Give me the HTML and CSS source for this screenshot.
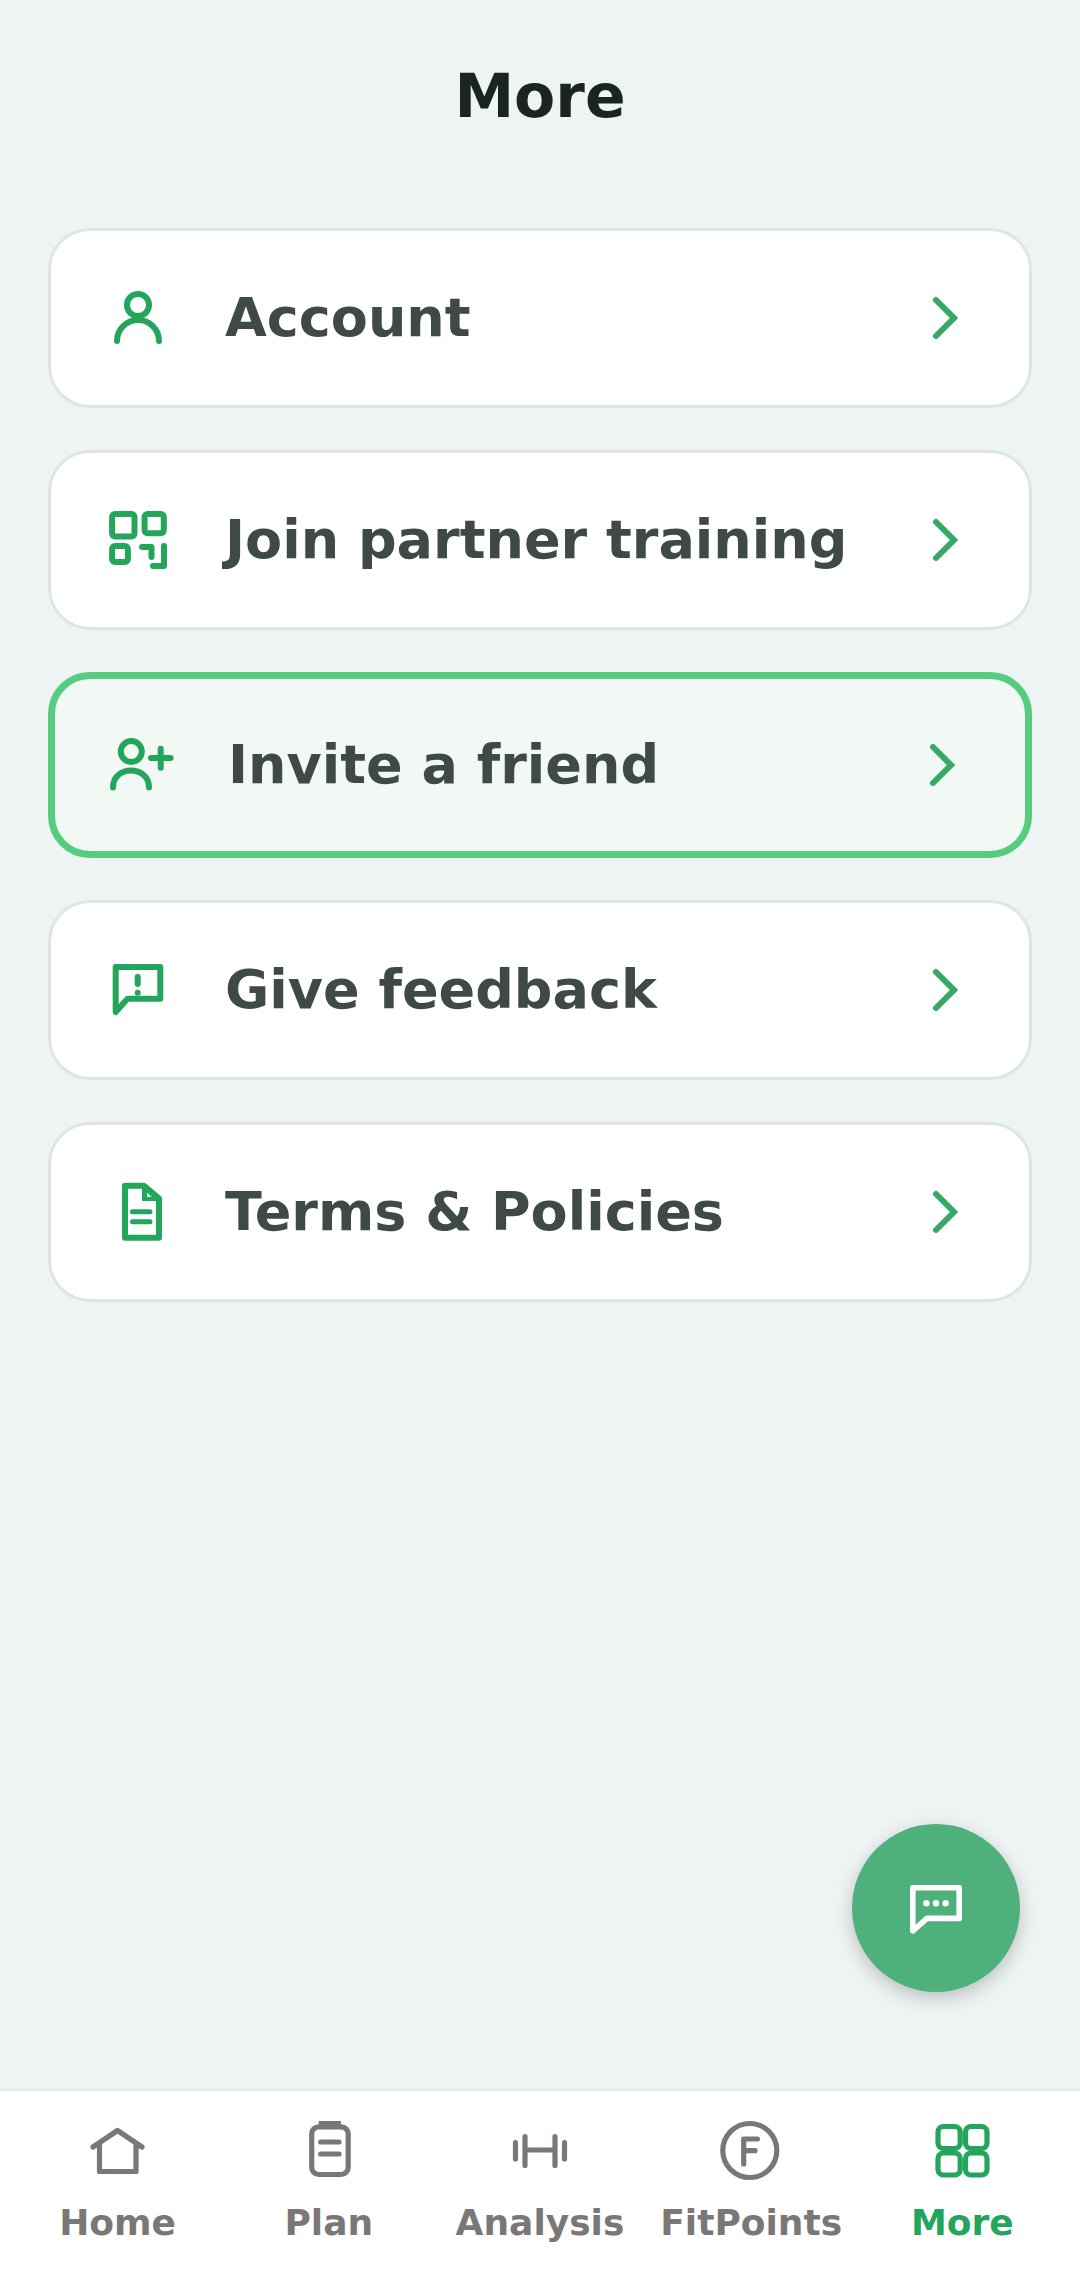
FILE: index.html
```html
<!DOCTYPE html>
<html lang="en">
<head>
<meta charset="utf-8">
<title>More</title>
<link rel="stylesheet" href="styles.css">
</head>
<body>
<div class="app">
  <main class="main">
    <h1 class="title">More</h1>
    <div class="list">
      <a class="card">
        <svg class="icon" viewBox="0 0 72 72"><circle cx="36" cy="23" r="11"/><path d="M15 59a21 21 0 0 1 42 0"/></svg>
        <span class="label">Account</span>
        <svg class="chev" viewBox="0 0 72 72"><path d="M27 18l18 18-18 18"/></svg>
      </a>
      <a class="card">
        <svg class="icon" viewBox="0 0 72 72"><rect x="10.1" y="10" width="22.4" height="22.4" rx="3"/><rect x="42.6" y="10" width="19.2" height="19.2" rx="3"/><rect x="10.1" y="42.1" width="15.8" height="16" rx="3"/><path d="M40 43h9.5v10M62 42v20H51"/></svg>
        <span class="label">Join partner training</span>
        <svg class="chev" viewBox="0 0 72 72"><path d="M27 18l18 18-18 18"/></svg>
      </a>
      <a class="card card-hi">
        <svg class="icon" viewBox="0 0 72 72"><circle cx="29.3" cy="22.5" r="10.5"/><path d="M11 58.5c0-22.6 36-22.6 36 0M49 29h19.6M58.7 19.7v19"/></svg>
        <span class="label">Invite a friend</span>
        <svg class="chev" viewBox="0 0 72 72"><path d="M27 18l18 18-18 18"/></svg>
      </a>
      <a class="card">
        <svg class="icon" viewBox="0 0 72 72"><path d="M13.7 13h44.6v31.7H25.5L13.7 58z"/><path d="M35.7 23v7"/><circle class="dot" cx="35.7" cy="38.7" r="3"/></svg>
        <span class="label">Give feedback</span>
        <svg class="chev" viewBox="0 0 72 72"><path d="M27 18l18 18-18 18"/></svg>
      </a>
      <a class="card">
        <svg class="icon" viewBox="0 0 72 72"><path d="M23 9.7h19l15 12.8v39.2H23z"/><path class="thin" d="M30.5 35.7h17.5M30.5 45.7h17.5"/><path class="dot" fill-rule="evenodd" d="M40 9.7h4L57 21v4H40zM45 16.7v4h5z"/></svg>
        <span class="label">Terms &amp; Policies</span>
        <svg class="chev" viewBox="0 0 72 72"><path d="M27 18l18 18-18 18"/></svg>
      </a>
    </div>
    <button class="fab">
      <svg class="fab-icon" viewBox="0 0 72 72"><path d="M12.8 15.8h46.4v30.6H27L12.8 58.8z"/><circle class="fill" cx="26.4" cy="31.3" r="3.2"/><circle class="fill" cx="36" cy="31.3" r="3.2"/><circle class="fill" cx="45.6" cy="31.3" r="3.2"/></svg>
    </button>
  </main>
  <nav class="nav">
    <a class="tab">
      <svg class="tab-icon" viewBox="0 0 72 72"><path d="M11 33l24.5-16.5L60 33M17.5 29v28.5H54V29"/></svg>
      <span>Home</span>
    </a>
    <a class="tab">
      <svg class="tab-icon" viewBox="0 0 72 72"><rect x="18.7" y="12.8" width="36.5" height="47.7" rx="7"/><path d="M27.7 28H46M27.7 40H46"/><rect class="solid" x="25.7" y="7" width="22.3" height="5"/></svg>
      <span>Plan</span>
    </a>
    <a class="tab">
      <svg class="tab-icon" viewBox="0 0 72 72"><path d="M11.5 28.5V45M21 22.5v29M51 22.5v29M60.5 28.5V45M21 36h30"/></svg>
      <span>Analysis</span>
    </a>
    <a class="tab">
      <svg class="tab-icon" viewBox="0 0 72 72"><circle cx="34.8" cy="36.5" r="27"/><path d="M28.7 50V25h13.7M28.7 36.7H40"/></svg>
      <span>FitPoints</span>
    </a>
    <a class="tab tab-on">
      <svg class="tab-icon" viewBox="0 0 72 72"><rect x="12" y="12.5" width="22.2" height="22" rx="5.5"/><rect x="39.5" y="12.5" width="21.5" height="22" rx="5.5"/><rect x="12" y="39" width="22.2" height="22" rx="5.5"/><rect x="39.5" y="39" width="21.5" height="22" rx="5.5"/></svg>
      <span>More</span>
    </a>
  </nav>
</div>
</body>
</html>
```
FILE: styles.css
```css
* { box-sizing: border-box; }
html, body { margin: 0; padding: 0; }
body { font-family: "DejaVu Sans", sans-serif; background: #eef4f4; }
.app { width: 1080px; height: 2280px; display: flex; flex-direction: column; }
.main { flex: 1; position: relative; display: flex; flex-direction: column; }
.title { margin: 0; height: 228px; padding-top: 61px; font-size: 60px; line-height: 70px; font-weight: 700; text-align: center; color: #1b2423; }
.list { display: flex; flex-direction: column; gap: 42px; padding: 0 48px; }
.card { height: 180px; display: flex; align-items: center; gap: 51px; padding: 0 48px 0 51px; background: #fff; border: 3px solid #dce6e9; border-radius: 42px; }
.card-hi { height: 186px; gap: 54px; padding: 0 47px; background: #f2f9f5; border: 7px solid #55cc7e; }
.label { flex: 1; margin-bottom: 2px; font-size: 54px; font-weight: 700; color: #3f4a45; }
.icon { width: 72px; height: 72px; flex: none; fill: none; stroke: #23a65b; stroke-width: 6; stroke-linecap: round; stroke-linejoin: round; }
.icon .thin { stroke-width: 5; }
.icon .dot { fill: #23a65b; stroke: none; }
.chev { width: 72px; height: 72px; flex: none; fill: none; stroke: #36a968; stroke-width: 6; stroke-linecap: round; stroke-linejoin: miter; }
.fab { position: absolute; right: 60px; bottom: 96px; width: 168px; height: 168px; padding: 0; border: 0; border-radius: 50%; background: #4eb07a; box-shadow: 0 6px 18px rgba(0, 0, 0, .22); display: flex; align-items: center; justify-content: center; }
.fab-icon { width: 72px; height: 72px; fill: none; stroke: #fff; stroke-width: 5.6; stroke-linejoin: round; stroke-linecap: round; }
.fab-icon .fill { fill: #fff; stroke: none; }
.nav { height: 192px; flex: none; display: grid; grid-template-columns: repeat(5, 1fr); padding: 23px 12px 0; background: #fff; border-top: 3px solid #e6edee; }
.tab { display: flex; flex-direction: column; align-items: center; font-size: 36px; font-weight: 700; line-height: 42px; color: #7a7776; }
.tab span { margin-top: 16px; }
.tab-icon { width: 72px; height: 72px; fill: none; stroke: #7a7776; stroke-width: 5.2; stroke-linecap: round; stroke-linejoin: round; }
.tab-icon .solid { fill: #7a7776; stroke: none; }
.tab-on { color: #23a65b; }
.tab-on .tab-icon { stroke: #23a65b; }
```
